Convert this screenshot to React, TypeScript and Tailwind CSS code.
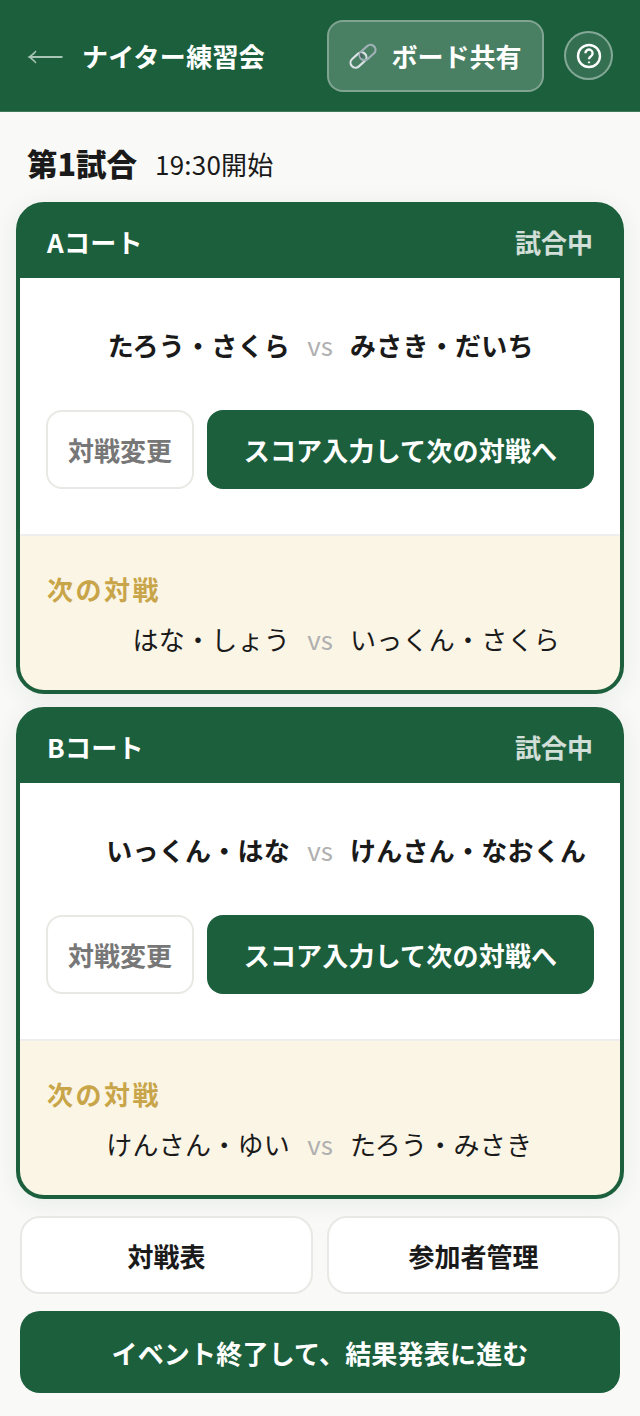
const jp = 'font-["Noto_Sans_CJK_JP","Noto_Sans",sans-serif]';

function Pair({ left, right, strong }: { left: string; right: string; strong?: boolean }) {
  const weight = strong ? 'font-bold' : 'font-normal';
  return (
    <div className="flex items-center justify-center text-[26px] tracking-[0.25px] text-[#1a1a1a]">
      <span className={`w-[270px] shrink-0 text-right whitespace-nowrap ${weight}`}>{left}</span>
      <span className="w-[60px] shrink-0 text-center text-[26px] font-normal tracking-normal text-[#b0b0b0]">vs</span>
      <span className={`w-[270px] shrink-0 text-left whitespace-nowrap ${weight}`}>{right}</span>
    </div>
  );
}

function Court({ name, pair, next }: { name: string; pair: [string, string]; next: [string, string] }) {
  return (
    <div className="h-[492.5px] overflow-hidden rounded-[28px] border-4 border-[#1c5f3d] bg-[#1c5f3d] shadow-[0_4px_24px_rgba(28,95,61,0.08)]">
      <div className="flex h-[72px] items-center justify-between px-[27px]">
        <span className="text-[26px] font-bold tracking-[0.3px] text-white">{name}</span>
        <span className="text-[26px] font-bold text-white/80">試合中</span>
      </div>
      <div className="h-[258.5px] border-b-2 border-[#eeeeec] bg-white">
        <div className="flex h-[132px] items-center justify-center pt-[2px]">
          <Pair left={pair[0]} right={pair[1]} strong />
        </div>
        <div className="flex gap-[13px] px-[26px]">
          <button className="h-[79px] w-[148px] rounded-[16px] border-2 border-[#e8e8e4] bg-white text-[26px] font-bold text-[#777777]">
            対戦変更
          </button>
          <button className="h-[79px] flex-1 rounded-[16px] bg-[#1c5f3d] text-[26px] font-bold tracking-[0.2px] text-white">
            スコア入力して次の対戦へ
          </button>
        </div>
      </div>
      <div className="h-[154px] bg-[#fbf5e6] pt-[34px]">
        <div className="pl-[27px] text-[26px] leading-[38px] font-bold tracking-[2.5px] text-[#c9a54a]">次の対戦</div>
        <div className="mt-[11px]">
          <Pair left={next[0]} right={next[1]} />
        </div>
      </div>
    </div>
  );
}

export default function App() {
  return (
    <div className={`h-[1416px] w-[640px] overflow-hidden bg-[#f9f9f7] ${jp}`}>
      <header className="flex h-[112px] items-center justify-between border-b border-[#3f7a5b] bg-[#1c5f3d] pl-[27px] pr-[27px]">
        <div className="flex items-center">
          <svg width="36" height="16" viewBox="0 0 36 16" className="mt-[2px]">
            <path d="M0.5 8C3.5 6.5 6.5 3.5 8.5 1.5L9.5 2.5C8 4.5 6.5 6 5 7H35.5V9H5C6.5 10 8 11.5 9.5 13.5L8.5 14.5C6.5 12.5 3.5 9.5 0.5 8Z" fill="#a9c5b5" />
          </svg>
          <span className="ml-[19px] text-[26px] font-bold tracking-[0.3px] text-white">ナイター練習会</span>
        </div>
        <div className="flex items-center gap-[20px]">
          <button className="flex h-[72px] w-[217px] items-center justify-center gap-[14px] rounded-[16px] border-2 border-white/30 bg-white/20 text-[26px] font-bold text-white">
            <svg width="28" height="28" viewBox="0 0 28 28" fill="none" strokeWidth="2.2">
              <rect x="4.5" y="9" width="10" height="18" rx="5" transform="rotate(48 9.5 18)" stroke="#dbe3e6" />
              <rect x="13.5" y="1.5" width="10" height="18" rx="5" transform="rotate(48 18.5 10.5)" stroke="#9fb0b6" />
              <path d="M12.4 11.4c-.5 1.6-.2 3 .9 4.2" stroke="#4f6166" />
            </svg>
            ボード共有
          </button>
          <button className="flex h-[49px] w-[49px] items-center justify-center rounded-full border-2 border-white/40 bg-white/10">
            <svg width="26" height="26" viewBox="0 0 26 26" fill="none" stroke="white" strokeWidth="2.4">
              <circle cx="13" cy="13" r="11" />
              <path d="M9.4 10.2a3.6 3.6 0 1 1 5.6 3c-1.4.8-2 1.5-2 3" />
              <circle cx="13" cy="19.4" r="0.7" fill="white" strokeWidth="1" />
            </svg>
          </button>
        </div>
      </header>

      <div className="flex h-[89.5px] items-center gap-[18px] pt-[12px] pl-[27px] text-[#1a1a1a]">
        <span className="text-[30.5px] leading-[40px] font-black">第1試合</span>
        <span className="mt-[2px] text-[26px] leading-[40px] font-normal tracking-[0.2px]">19:30開始</span>
      </div>

      <div className="flex flex-col gap-[12.5px] px-[16px]">
        <Court name="Aコート" pair={['たろう・さくら', 'みさき・だいち']} next={['はな・しょう', 'いっくん・さくら']} />
        <Court name="Bコート" pair={['いっくん・はな', 'けんさん・なおくん']} next={['けんさん・ゆい', 'たろう・みさき']} />
      </div>

      <div className="mt-[17px] flex gap-[14px] px-[20px]">
        <button className="h-[78px] flex-1 rounded-[20px] border-2 border-[#e8e8e4] bg-white text-[26px] font-bold text-[#1a1a1a]">
          対戦表
        </button>
        <button className="h-[78px] flex-1 rounded-[20px] border-2 border-[#e8e8e4] bg-white text-[26px] font-bold text-[#1a1a1a]">
          参加者管理
        </button>
      </div>
      <div className="mt-[17px] px-[20px]">
        <button className="h-[82px] w-full rounded-[20px] bg-[#1c5f3d] text-[26px] font-bold tracking-[0.2px] text-white">
          イベント終了して、結果発表に進む
        </button>
      </div>
    </div>
  );
}
